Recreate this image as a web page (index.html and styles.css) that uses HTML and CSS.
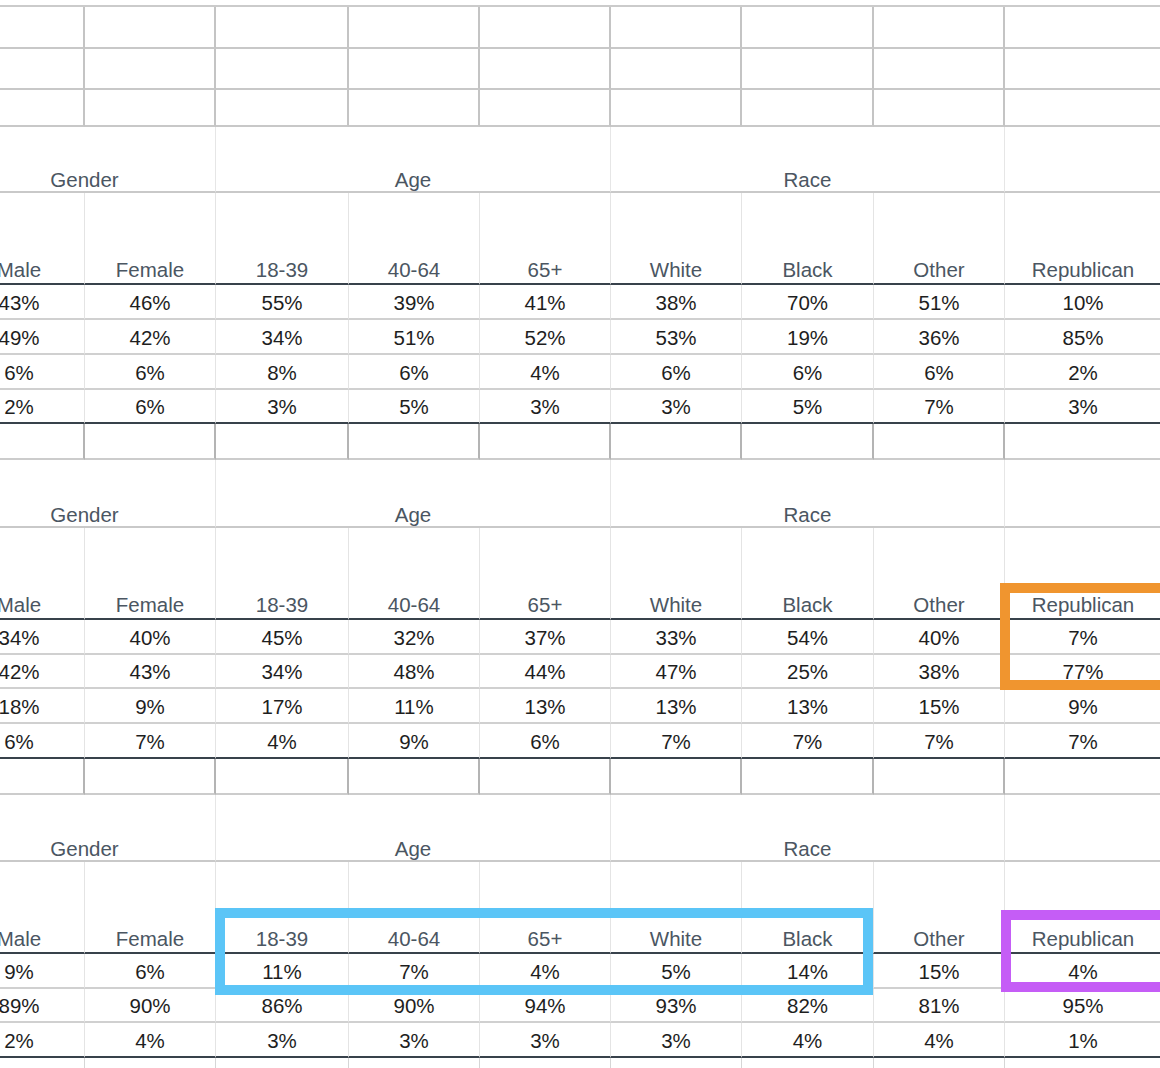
FILE: index.html
```html
<!DOCTYPE html>
<html lang="en">
<head>
<meta charset="utf-8">
<title>Crosstabs</title>
<link rel="stylesheet" href="styles.css">
</head>
<body>
<div class="page">
  <div class="sheet">
    <div class="row top h42"><div class="c"></div><div class="c"></div><div class="c"></div><div class="c"></div><div class="c"></div><div class="c"></div><div class="c"></div><div class="c"></div><div class="c"></div></div>
    <div class="row top h41"><div class="c"></div><div class="c"></div><div class="c"></div><div class="c"></div><div class="c"></div><div class="c"></div><div class="c"></div><div class="c"></div><div class="c"></div></div>
    <div class="row top h37"><div class="c"></div><div class="c"></div><div class="c"></div><div class="c"></div><div class="c"></div><div class="c"></div><div class="c"></div><div class="c"></div><div class="c"></div></div>

    <!-- Block 1 -->
    <div class="row group h66"><div class="c span2">Gender</div><div class="c span3">Age</div><div class="c span3">Race</div><div class="c"></div></div>
    <div class="row head"><div class="c">Male</div><div class="c">Female</div><div class="c">18-39</div><div class="c">40-64</div><div class="c">65+</div><div class="c">White</div><div class="c">Black</div><div class="c">Other</div><div class="c">Republican</div></div>
    <div class="row data h35"><div class="c">43%</div><div class="c">46%</div><div class="c">55%</div><div class="c">39%</div><div class="c">41%</div><div class="c">38%</div><div class="c">70%</div><div class="c">51%</div><div class="c">10%</div></div>
    <div class="row data h35"><div class="c">49%</div><div class="c">42%</div><div class="c">34%</div><div class="c">51%</div><div class="c">52%</div><div class="c">53%</div><div class="c">19%</div><div class="c">36%</div><div class="c">85%</div></div>
    <div class="row data h35"><div class="c">6%</div><div class="c">6%</div><div class="c">8%</div><div class="c">6%</div><div class="c">4%</div><div class="c">6%</div><div class="c">6%</div><div class="c">6%</div><div class="c">2%</div></div>
    <div class="row data last h34"><div class="c">2%</div><div class="c">6%</div><div class="c">3%</div><div class="c">5%</div><div class="c">3%</div><div class="c">3%</div><div class="c">5%</div><div class="c">7%</div><div class="c">3%</div></div>
    <div class="row blank h36"><div class="c"></div><div class="c"></div><div class="c"></div><div class="c"></div><div class="c"></div><div class="c"></div><div class="c"></div><div class="c"></div><div class="c"></div></div>

    <!-- Block 2 -->
    <div class="row group h68"><div class="c span2">Gender</div><div class="c span3">Age</div><div class="c span3">Race</div><div class="c"></div></div>
    <div class="row head"><div class="c">Male</div><div class="c">Female</div><div class="c">18-39</div><div class="c">40-64</div><div class="c">65+</div><div class="c">White</div><div class="c">Black</div><div class="c">Other</div><div class="c">Republican</div></div>
    <div class="row data h35"><div class="c">34%</div><div class="c">40%</div><div class="c">45%</div><div class="c">32%</div><div class="c">37%</div><div class="c">33%</div><div class="c">54%</div><div class="c">40%</div><div class="c">7%</div></div>
    <div class="row data h34"><div class="c">42%</div><div class="c">43%</div><div class="c">34%</div><div class="c">48%</div><div class="c">44%</div><div class="c">47%</div><div class="c">25%</div><div class="c">38%</div><div class="c">77%</div></div>
    <div class="row data h35"><div class="c">18%</div><div class="c">9%</div><div class="c">17%</div><div class="c">11%</div><div class="c">13%</div><div class="c">13%</div><div class="c">13%</div><div class="c">15%</div><div class="c">9%</div></div>
    <div class="row data last h35"><div class="c">6%</div><div class="c">7%</div><div class="c">4%</div><div class="c">9%</div><div class="c">6%</div><div class="c">7%</div><div class="c">7%</div><div class="c">7%</div><div class="c">7%</div></div>
    <div class="row blank h36"><div class="c"></div><div class="c"></div><div class="c"></div><div class="c"></div><div class="c"></div><div class="c"></div><div class="c"></div><div class="c"></div><div class="c"></div></div>

    <!-- Block 3 -->
    <div class="row group h67"><div class="c span2">Gender</div><div class="c span3">Age</div><div class="c span3">Race</div><div class="c"></div></div>
    <div class="row head"><div class="c">Male</div><div class="c">Female</div><div class="c">18-39</div><div class="c">40-64</div><div class="c">65+</div><div class="c">White</div><div class="c">Black</div><div class="c">Other</div><div class="c">Republican</div></div>
    <div class="row data h35"><div class="c">9%</div><div class="c">6%</div><div class="c">11%</div><div class="c">7%</div><div class="c">4%</div><div class="c">5%</div><div class="c">14%</div><div class="c">15%</div><div class="c">4%</div></div>
    <div class="row data h34"><div class="c">89%</div><div class="c">90%</div><div class="c">86%</div><div class="c">90%</div><div class="c">94%</div><div class="c">93%</div><div class="c">82%</div><div class="c">81%</div><div class="c">95%</div></div>
    <div class="row data last h35"><div class="c">2%</div><div class="c">4%</div><div class="c">3%</div><div class="c">3%</div><div class="c">3%</div><div class="c">3%</div><div class="c">4%</div><div class="c">4%</div><div class="c">1%</div></div>
    <div class="row tail h36"><div class="c"></div><div class="c"></div><div class="c"></div><div class="c"></div><div class="c"></div><div class="c"></div><div class="c"></div><div class="c"></div><div class="c"></div></div>
  </div>

  <div class="hl hl-orange"></div>
  <div class="hl hl-blue"></div>
  <div class="hl hl-purple"></div>
</div>
</body>
</html>
```

FILE: styles.css
```css
html, body {
  margin: 0;
  padding: 0;
  background: #ffffff;
}

body {
  width: 1160px;
  height: 1068px;
  overflow: hidden;
  font-family: "Liberation Sans", Arial, Helvetica, sans-serif;
}

.page {
  position: relative;
  width: 1160px;
  height: 1068px;
  overflow: hidden;
}

.sheet {
  margin-left: -46px;
  margin-top: 5px;
  width: 1208px;
  border-top: 2px solid #cbcbcb;
}

.row {
  display: grid;
  grid-template-columns: 131px 131px 133px 131px 131px 131px 132px 131px 157px;
}

.c {
  box-sizing: border-box;
  border-right: 1px solid #e4e4e4;
  border-bottom: 2px solid #d0d0d0;
  display: flex;
  align-items: center;
  justify-content: center;
  font-size: 20.5px;
  line-height: 23px;
  white-space: nowrap;
}

.span2 { grid-column: span 2; }
.span3 { grid-column: span 3; }

.h34 { height: 34px; }
.h35 { height: 35px; }
.h36 { height: 36px; }
.h37 { height: 37px; }
.h41 { height: 41px; }
.h42 { height: 42px; }
.h66 { height: 66px; }
.h67 { height: 67px; }
.h68 { height: 68px; }

/* empty grid rows at the very top */
.top .c {
  border-right: 2px solid #c4c4c4;
  border-bottom: 2px solid #c8c8c8;
}

/* group labels: Gender / Age / Race */
.group .c {
  align-items: flex-end;
  padding-bottom: 0;
  color: #4b5662;
  border-right: 1px solid #e6e6e6;
  border-bottom: 2px solid #c9c9c9;
}

/* column headings */
.head {
  height: 92px;
}

.head .c {
  align-items: flex-end;
  padding-bottom: 2px;
  color: #4b5662;
  border-bottom: 2px solid #38424b;
}

.data .c {
  color: #1e1e1e;
  padding-top: 1px;
}

.data.last .c {
  border-bottom: 2px solid #38424b;
}

.blank .c {
  border-right: 2px solid #b4b4b4;
  border-bottom: 2px solid #cccccc;
}

.tail .c {
  border-right: 1px solid #d6d6d6;
  border-bottom: 0;
}

/* highlight frames drawn over the sheet */
.hl {
  position: absolute;
  box-sizing: border-box;
  border-width: 10px;
  border-style: solid;
}

.hl-orange {
  left: 1000px;
  top: 583px;
  width: 220px;
  height: 107px;
  border-color: #f0952f;
}

.hl-blue {
  left: 215px;
  top: 908px;
  width: 658px;
  height: 87px;
  border-color: #5bc5f7;
}

.hl-purple {
  left: 1001px;
  top: 910px;
  width: 220px;
  height: 82px;
  border-color: #c55df6;
}
```
